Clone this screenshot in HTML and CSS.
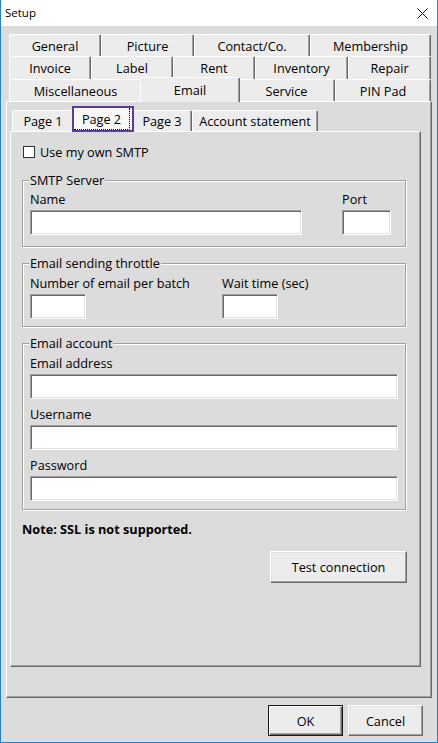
FILE: index.html
```html
<!DOCTYPE html>
<html lang="en">
<head>
<meta charset="utf-8">
<title>Setup</title>
<link rel="stylesheet" href="styles.css">
</head>
<body>
<div class="window">
  <div class="titlebar">
    <span class="title">Setup</span>
    <svg class="close" viewBox="0 0 11 11" aria-label="Close">
      <path d="M0.5 0.5 L10.5 10.5 M10.5 0.5 L0.5 10.5" stroke="#111" stroke-width="1" fill="none"/>
    </svg>
  </div>
  <div class="client">
    <div class="tabstrip">
      <div class="tabrow r1">
        <div class="tab">General</div>
        <div class="tab">Picture</div>
        <div class="tab">Contact/Co.</div>
        <div class="tab">Membership</div>
      </div>
      <div class="tabrow r2">
        <div class="tab">Invoice</div>
        <div class="tab">Label</div>
        <div class="tab">Rent</div>
        <div class="tab">Inventory</div>
        <div class="tab">Repair</div>
      </div>
      <div class="tabrow r3">
        <div class="tab">Miscellaneous</div>
        <div class="tab sel">Email</div>
        <div class="tab">Service</div>
        <div class="tab">PIN Pad</div>
      </div>
    </div>
    <div class="pane">
      <div class="subtabs">
        <div class="tab">Page 1</div>
        <div class="tab subsel"><span class="focus">Page 2</span></div>
        <div class="tab">Page 3</div>
        <div class="tab">Account statement</div>
      </div>
      <div class="subpane">
        <label class="check"><span class="box"></span>Use my own SMTP</label>

        <div class="group smtp">
          <span class="legend">SMTP Server</span>
          <div class="grid smtp-grid">
            <span>Name</span>
            <span>Port</span>
            <input class="field w-name" type="text">
            <input class="field w-port" type="text">
          </div>
        </div>

        <div class="group throttle">
          <span class="legend">Email sending throttle</span>
          <div class="grid throttle-grid">
            <span>Number of email per batch</span>
            <span>Wait time (sec)</span>
            <input class="field w-small" type="text">
            <input class="field w-small" type="text">
          </div>
        </div>

        <div class="group account">
          <span class="legend">Email account</span>
          <span class="lbl first">Email address</span>
          <input class="field w-full" type="text">
          <span class="lbl">Username</span>
          <input class="field w-full" type="text">
          <span class="lbl">Password</span>
          <input class="field w-full" type="password">
        </div>

        <div class="note">Note: SSL is not supported.</div>
        <button class="btn btn-test" type="button">Test connection</button>
      </div>
    </div>
    <div class="actions">
      <button class="btn btn-default" type="button">OK</button>
      <button class="btn" type="button">Cancel</button>
    </div>
  </div>
</div>
</body>
</html>
```
FILE: styles.css
```css
* {
  box-sizing: border-box;
}

html, body {
  margin: 0;
  padding: 0;
}

body {
  width: 438px;
  height: 743px;
  font-family: "Open Sans", "Noto Sans", sans-serif;
  font-size: 12.7px;
  line-height: 16px;
  color: #000;
  background: #fff;
}

.window {
  width: 438px;
  height: 743px;
  border: 1px solid #1883d7;
  border-top: 0;
  display: flex;
  flex-direction: column;
}

.titlebar {
  flex: none;
  height: 26px;
  background: #fff;
  display: flex;
  align-items: center;
  justify-content: space-between;
  padding: 0 9px 0 4px;
}

.title {
  font-size: 11.5px;
}

.close {
  display: block;
  width: 11px;
  height: 11px;
}

.client {
  flex: 1;
  background: #dcdcdc;
  display: flex;
  flex-direction: column;
  padding: 8px 5px 6px;
}

.tabstrip {
  flex: none;
  padding: 0 1px 0 3px;
}

.tabrow {
  display: grid;
}

.r1 {
  height: 22px;
  grid-template-columns: 92px 93px 116px 121px;
}

.r2 {
  height: 23px;
  grid-template-columns: 82px 82px 82px 93px 83px;
}

.r3 {
  height: 22px;
  grid-template-columns: 133px 96px 97px 96px;
}

.tab {
  background: #ececec;
  border-left: 1px solid #fff;
  border-top: 1px solid #fff;
  border-right: 1px solid #696969;
  box-shadow: inset -1px 0 0 #a0a0a0;
  border-radius: 2px 2px 0 0;
  display: flex;
  align-items: center;
  justify-content: center;
  white-space: nowrap;
}

.tab.sel {
  margin: -2px -2px -1px;
  position: relative;
  z-index: 1;
}

.pane {
  flex: none;
  height: 597px;
  border: 1px solid;
  border-color: #fff #696969 #696969 #fff;
  box-shadow: inset -1px -1px 0 #a0a0a0;
  display: flex;
  flex-direction: column;
  padding: 8px 10px 30px 3px;
}

.subtabs {
  flex: none;
  height: 21px;
  display: grid;
  grid-template-columns: 62px 58px 60px 126px;
  padding-left: 2px;
}

.tab.subsel {
  margin: -4px -2px -1px;
  border: 2px solid #5c3a9e;
  border-radius: 0;
  box-shadow: none;
  background: #f8f8f8;
  position: relative;
  z-index: 1;
  align-items: stretch;
  justify-content: stretch;
}

.focus {
  flex: 1;
  display: flex;
  align-items: center;
  justify-content: center;
  margin-right: 2px;
  border-right: 1px dotted #000;
  border-bottom: 1px dotted #000;
}

.subpane {
  flex: 1;
  border: 1px solid;
  border-color: #fff #696969 #696969 #fff;
  box-shadow: inset -1px -1px 0 #a0a0a0;
  display: flex;
  flex-direction: column;
  padding: 12px 13px 0 11px;
}

.check {
  display: flex;
  align-items: center;
  gap: 5px;
  height: 16px;
}

.box {
  width: 12px;
  height: 12px;
  margin-left: 1px;
  background: #fff;
  border: 1px solid #333;
}

.group {
  margin-top: 16px;
  margin-right: 1px;
  border: 1px solid #a0a0a0;
  box-shadow: inset 1px 1px 0 #fff, 1px 1px 0 #fff;
  padding: 0 7px 7px;
  display: flex;
  flex-direction: column;
}

.group.smtp {
  margin-top: 20px;
  padding-bottom: 11px;
}

.group.account {
  padding-bottom: 8px;
}

.legend {
  align-self: flex-start;
  margin: -9px 0 0 -1px;
  padding: 0 1px;
  height: 16px;
  background: #dcdcdc;
}

.grid {
  display: grid;
  grid-template-rows: 16px 25px;
  row-gap: 3px;
}

.smtp-grid {
  margin-top: 3px;
  grid-template-columns: 312px 1fr;
}

.throttle-grid {
  margin-top: 4px;
  grid-template-columns: 192px 1fr;
}

.lbl {
  display: block;
  height: 16px;
  margin-top: 7px;
}

.lbl.first {
  margin-top: 4px;
}

.field {
  display: block;
  height: 25px;
  margin: 0;
  padding: 0 3px;
  font: inherit;
  background: #fff;
  border: 1px solid;
  border-color: #a0a0a0 #fff #fff #a0a0a0;
  box-shadow: inset 1px 1px 0 #696969, inset -1px -1px 0 #e3e3e3;
  outline: none;
  appearance: none;
  border-radius: 0;
}

.account .field {
  margin-top: 3px;
}

.w-name {
  width: 272px;
}

.w-port {
  width: 49px;
}

.w-small {
  width: 56px;
}

.w-full {
  width: 100%;
}

.note {
  margin-top: 11px;
  height: 16px;
  font-weight: 700;
}

.btn {
  width: 75px;
  height: 31px;
  margin: 0;
  padding: 0;
  font: inherit;
  color: #000;
  background: #ececec;
  border: 1px solid;
  border-color: #fff #696969 #696969 #fff;
  box-shadow: inset -1px -1px 0 #a0a0a0, inset 1px 1px 0 #e3e3e3;
  border-radius: 0;
}

.btn-test {
  align-self: flex-end;
  width: 137px;
  height: 32px;
  margin-top: 14px;
}

.btn-default {
  border-color: #1a1a1a;
  box-shadow: inset 1px 1px 0 #fff, inset -1px -1px 0 #696969, inset -2px -2px 0 #a0a0a0;
}

.actions {
  flex: none;
  display: flex;
  justify-content: flex-end;
  gap: 5px;
  margin-top: 7px;
  padding-right: 9px;
}
```
